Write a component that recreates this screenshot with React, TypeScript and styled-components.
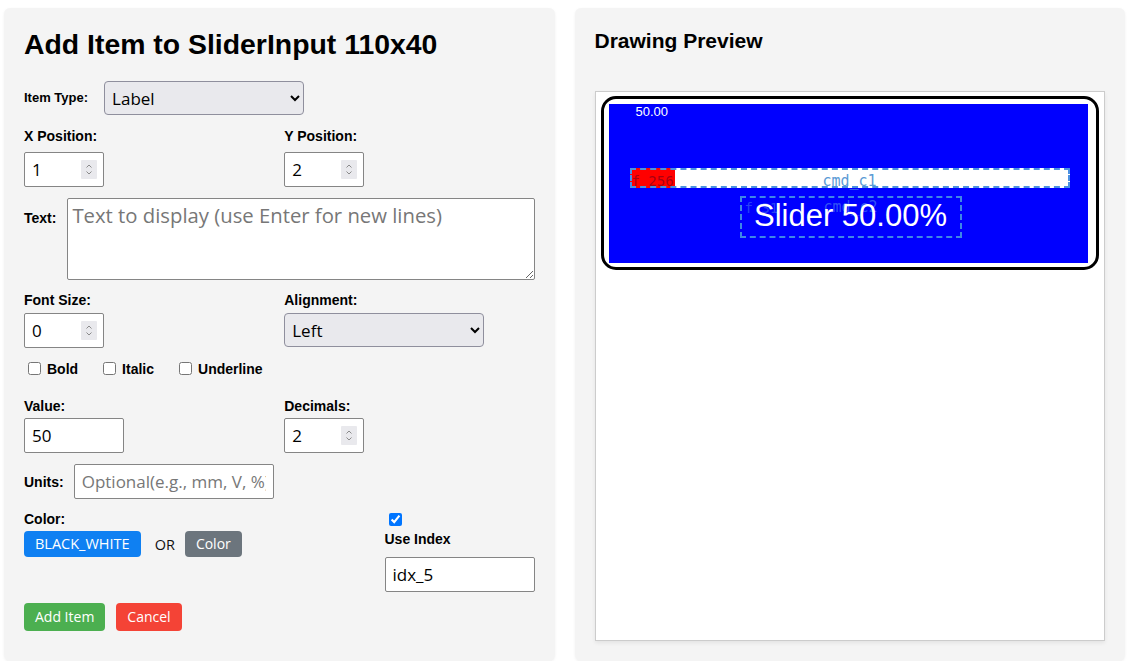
import React from "react";
import styled, { createGlobalStyle, css } from "styled-components";

const GlobalStyle = createGlobalStyle`
  *, *::before, *::after { box-sizing: border-box; }
  html, body { margin: 0; padding: 0; background: #ffffff; }
  body { font-family: "Liberation Sans", Arial, sans-serif; color: #000; }
`;

const Page = styled.div`
  display: flex;
  gap: 20px;
  padding: 8px 6px 0 4px;
  align-items: stretch;
`;

const Panel = styled.section`
  flex: 1 1 0;
  min-width: 0;
  background: #f4f4f4;
  border-radius: 6px;
  padding: 20px;
  box-shadow: 0 1px 3px rgba(0, 0, 0, 0.06);
`;

const Title = styled.h2`
  margin: 0 0 21px;
  font-size: 28.4px;
  line-height: 32px;
  font-weight: bold;
`;

const InlineRow = styled.div<{ $gap: number; $align?: string; $mt?: number }>`
  display: flex;
  align-items: ${(p) => p.$align ?? "center"};
  gap: ${(p) => p.$gap}px;
  margin-top: ${(p) => p.$mt ?? 0}px;
`;

const InlineLabel = styled.label<{ $size?: number }>`
  font-size: ${(p) => p.$size ?? 14}px;
  font-weight: bold;
  line-height: 16px;
  white-space: nowrap;
`;

const TwoCol = styled.div<{ $mt: number }>`
  display: grid;
  grid-template-columns: 1fr 1fr;
  column-gap: 10px;
  margin-top: ${(p) => p.$mt}px;
`;

const Group = styled.div``;

const FieldLabel = styled.label<{ $mt?: number; $mb: number }>`
  display: block;
  font-size: 14px;
  font-weight: bold;
  line-height: 16px;
  margin-top: ${(p) => p.$mt ?? 0}px;
  margin-bottom: ${(p) => p.$mb}px;
`;

const fieldBase = css`
  font-family: "Open Sans", "Noto Sans", sans-serif;
  font-size: 17px;
  color: #000;
  background: #fff;
  border: 1px solid #858585;
  border-radius: 2px;
  outline: none;
`;

const Field = styled.input<{ $w: string; $h?: number }>`
  ${fieldBase};
  display: block;
  width: ${(p) => p.$w};
  height: ${(p) => p.$h ?? 35}px;
  padding: 0 7px;
  &::placeholder { color: #777; }
  &::-webkit-inner-spin-button,
  &::-webkit-outer-spin-button {
    -webkit-appearance: none;
    margin: 0;
  }
`;

const NumberWrap = styled.div`
  position: relative;
  width: 80px;
`;

const Spinner = styled.span`
  position: absolute;
  right: 7px;
  top: 8px;
  width: 16px;
  height: 19px;
  background: #e9e9ed;
  border-radius: 1px;
  pointer-events: none;
  display: flex;
  align-items: center;
  justify-content: center;
`;

const TextArea = styled.textarea`
  ${fieldBase};
  flex: 1;
  height: 82px;
  font-size: 20.3px;
  padding: 2px 4px;
  resize: both;
  &::placeholder { color: #777; }
`;

const Select = styled.select`
  font-family: "Open Sans", "Noto Sans", sans-serif;
  font-size: 17px;
  color: #000;
  width: 200px;
  height: 34px;
  padding: 0 3px;
  background-color: #e9e9ed;
  border: 1px solid #8f8f9d;
  border-radius: 4px;
`;

const CheckRow = styled.div`
  display: flex;
  gap: 21px;
  margin-top: 11px;
  height: 19px;
  align-items: center;
`;

const CheckLabel = styled.label`
  display: flex;
  align-items: center;
  font-size: 14px;
  font-weight: bold;
`;

const Check = styled.input`
  width: 13px;
  height: 13px;
  margin: 3px 6px 3px 4px;
`;

const ColorSection = styled.div`
  display: flex;
  justify-content: space-between;
  align-items: flex-start;
  margin-top: 12px;
`;

const ButtonRow = styled.div<{ $gap: number; $mt?: number }>`
  display: flex;
  align-items: center;
  gap: ${(p) => p.$gap}px;
  margin-top: ${(p) => p.$mt ?? 0}px;
`;

const Btn = styled.button<{ $bg: string; $py: number; $fs: number }>`
  font-family: "Open Sans", "Noto Sans", sans-serif;
  font-size: ${(p) => p.$fs}px;
  line-height: 18px;
  color: #fff;
  background: ${(p) => p.$bg};
  border: none;
  border-radius: 4px;
  padding: ${(p) => p.$py}px 11px;
  cursor: pointer;
`;

const OrText = styled.span`
  font-family: "Open Sans", "Noto Sans", sans-serif;
  font-size: 14.5px;
  color: #111;
  margin: 0 10px 0 14px;
`;

const IndexColumn = styled.div`
  width: 150px;
`;

const IndexCheck = styled.input`
  display: block;
  width: 13px;
  height: 13px;
  margin: 2px 0 0 4px;
`;

/* ---------- preview ---------- */

const PreviewTitle = styled.h3`
  margin: 0 0 38px;
  font-size: 21px;
  line-height: 25px;
  font-weight: bold;
`;

const Canvas = styled.div`
  height: 550px;
  background: #fff;
  border: 1px solid #cccccc;
  box-shadow: 0 2px 4px rgba(0, 0, 0, 0.07);
  padding: 4px 0 0 5px;
`;

const Frame = styled.div`
  position: relative;
  width: 498px;
  height: 174px;
  border: 3px solid #000;
  border-radius: 15px;
  background: #fff;
`;

const Screen = styled.div`
  position: absolute;
  left: 5px;
  top: 5px;
  width: 479px;
  height: 159px;
  background: #0000ff;
  overflow: hidden;
`;

const ValueText = styled.div`
  position: absolute;
  left: 27px;
  top: 0;
  color: #fff;
  font-size: 13px;
  line-height: 15px;
`;

const SliderBar = styled.div`
  position: absolute;
  left: 21px;
  top: 64px;
  width: 440px;
  height: 20px;
  border: 2px dashed #4a90e2;
  background-origin: border-box;
  background-repeat: no-repeat;
`;

const TagText = styled.span<{ $color: string; $size: number }>`
  position: absolute;
  top: 3px;
  font-family: "DejaVu Sans Mono", "Liberation Mono", monospace;
  font-size: ${(p) => p.$size}px;
  line-height: 16px;
  color: ${(p) => p.$color};
  white-space: nowrap;
`;

const TagLeft = styled(TagText)`
  left: 0;
`;

const TagCenter = styled(TagText)`
  left: 0;
  right: 0;
  text-align: center;
`;

const TextBox = styled.div`
  position: absolute;
  left: 131px;
  top: 92px;
  width: 222px;
  height: 42px;
  border: 2px dashed #3f86e6;
`;

const BigText = styled.div`
  position: relative;
  text-align: center;
  color: #fff;
  font-size: 31px;
  line-height: 36px;
  white-space: nowrap;
`;

function SpinIcon() {
  return (
    <svg width="16" height="19" viewBox="0 0 16 19" fill="none">
      <path d="M5.5 7.5 L8 5 L10.5 7.5" stroke="#8a8a8a" strokeWidth="1" />
      <path d="M5.5 11.5 L8 14 L10.5 11.5" stroke="#8a8a8a" strokeWidth="1" />
    </svg>
  );
}

function NumberField({ value }: { value: number }) {
  return (
    <NumberWrap>
      <Field type="number" defaultValue={value} $w="80px" />
      <Spinner>
        <SpinIcon />
      </Spinner>
    </NumberWrap>
  );
}

export default function App() {
  const fill = 45;
  return (
    <>
      <GlobalStyle />
      <Page>
        <Panel>
          <Title>Add Item to SliderInput 110x40</Title>

          <InlineRow $gap={16}>
            <InlineLabel $size={13}>Item Type:</InlineLabel>
            <Select defaultValue="Label">
              <option>Label</option>
              <option>Slider</option>
              <option>Button</option>
            </Select>
          </InlineRow>

          <TwoCol $mt={12}>
            <Group>
              <FieldLabel $mt={1} $mb={8}>X Position:</FieldLabel>
              <NumberField value={1} />
            </Group>
            <Group>
              <FieldLabel $mt={1} $mb={8}>Y Position:</FieldLabel>
              <NumberField value={2} />
            </Group>
          </TwoCol>

          <InlineRow $gap={11} $align="baseline" $mt={11}>
            <InlineLabel>Text:</InlineLabel>
            <TextArea placeholder="Text to display (use Enter for new lines)" />
          </InlineRow>

          <TwoCol $mt={12}>
            <Group>
              <FieldLabel $mb={5}>Font Size:</FieldLabel>
              <NumberField value={0} />
            </Group>
            <Group>
              <FieldLabel $mb={5}>Alignment:</FieldLabel>
              <Select defaultValue="Left">
                <option>Left</option>
                <option>Center</option>
                <option>Right</option>
              </Select>
            </Group>
          </TwoCol>

          <CheckRow>
            <CheckLabel>
              <Check type="checkbox" />
              Bold
            </CheckLabel>
            <CheckLabel>
              <Check type="checkbox" />
              Italic
            </CheckLabel>
            <CheckLabel>
              <Check type="checkbox" />
              Underline
            </CheckLabel>
          </CheckRow>

          <TwoCol $mt={20}>
            <Group>
              <FieldLabel $mb={4}>Value:</FieldLabel>
              <Field type="text" defaultValue="50" $w="100px" />
            </Group>
            <Group>
              <FieldLabel $mb={4}>Decimals:</FieldLabel>
              <NumberField value={2} />
            </Group>
          </TwoCol>

          <InlineRow $gap={10} $mt={11}>
            <InlineLabel>Units:</InlineLabel>
            <Field type="text" placeholder="Optional(e.g., mm, V, %)" $w="200px" />
          </InlineRow>

          <ColorSection>
            <Group>
              <FieldLabel $mb={4}>Color:</FieldLabel>
              <ButtonRow $gap={0}>
                <Btn $bg="#0f80f2" $py={4} $fs={14.5}>BLACK_WHITE</Btn>
                <OrText>OR</OrText>
                <Btn $bg="#6c757d" $py={4} $fs={14}>Color</Btn>
              </ButtonRow>
            </Group>
            <IndexColumn>
              <IndexCheck type="checkbox" defaultChecked />
              <FieldLabel $mt={5} $mb={10}>Use Index</FieldLabel>
              <Field type="text" defaultValue="idx_5" $w="100%" />
            </IndexColumn>
          </ColorSection>

          <ButtonRow $gap={11} $mt={11}>
            <Btn $bg="#4caf50" $py={5} $fs={14}>Add Item</Btn>
            <Btn $bg="#f44336" $py={5} $fs={14}>Cancel</Btn>
          </ButtonRow>
        </Panel>

        <Panel>
          <PreviewTitle>Drawing Preview</PreviewTitle>
          <Canvas>
            <Frame>
              <Screen>
                <ValueText>50.00</ValueText>
                <SliderBar
                  style={{
                    backgroundImage: `linear-gradient(to right, #ff0000 ${fill}px, #ffffff ${fill}px)`,
                  }}
                >
                  <TagLeft $color="rgba(110, 0, 30, 0.6)" $size={14}>f 256</TagLeft>
                  <TagCenter $color="#5b9bd5" $size={15}>cmd_c1</TagCenter>
                </SliderBar>
                <TextBox>
                  <TagLeft $color="rgba(90, 150, 235, 0.45)" $size={14} style={{ top: 2, left: 3 }}>
                    f 31
                  </TagLeft>
                  <TagCenter $color="rgba(90, 150, 235, 0.55)" $size={15} style={{ top: 1 }}>
                    cmd_c2
                  </TagCenter>
                  <BigText>Slider 50.00%</BigText>
                </TextBox>
              </Screen>
            </Frame>
          </Canvas>
        </Panel>
      </Page>
    </>
  );
}
